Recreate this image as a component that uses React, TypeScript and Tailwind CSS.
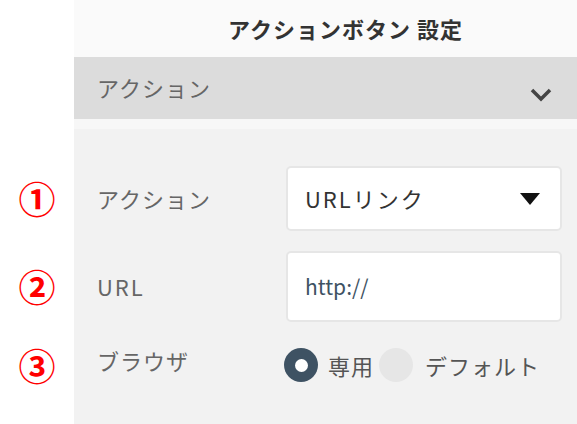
const font = { fontFamily: '"Noto Sans CJK JP", "Noto Sans", sans-serif' };

function Num({ n }: { n: string }) {
  return (
    <div className="flex w-[74px] shrink-0 items-center justify-center self-stretch bg-white">
      <span className="text-[37px] leading-none font-bold text-[#ff0000]">{n}</span>
    </div>
  );
}

export default function App() {
  return (
    <div className="flex h-[424px] w-[577px] flex-col overflow-hidden bg-white" style={font}>
      <div className="flex h-[57px]">
        <div className="w-[74px] shrink-0 bg-white" />
        <div className="flex flex-1 items-center bg-[#fafafa] pl-[154px]">
          <span className="text-[22px] font-bold tracking-[1px] text-[#333]">アクションボタン 設定</span>
        </div>
      </div>

      <div className="flex h-[62px]">
        <div className="w-[74px] shrink-0 bg-white" />
        <div className="flex flex-1 items-center justify-between bg-[#dcdcdc] pr-[25px] pl-[23px]">
          <span className="-mt-[2px] text-[22px] tracking-[1px] text-[#666]">アクション</span>
          <svg width="22" height="14" viewBox="0 0 22 14" className="mt-[14px]">
            <path d="M2 2L11 11L20 2" fill="none" stroke="#444" strokeWidth="3.5" />
          </svg>
        </div>
      </div>

      <div className="flex h-[10px]">
        <div className="w-[74px] shrink-0 bg-white" />
        <div className="flex-1 bg-[#f7f7f7]" />
      </div>

      <div className="flex flex-1">
        <div className="w-[74px] shrink-0 bg-white" />
        <div className="flex-1 bg-[#f2f2f2]" />
      </div>

      <div className="absolute top-[166px] left-0 flex w-[577px] flex-col gap-[20px]">
        <div className="flex h-[65px] items-center">
          <Num n="①" />
          <div className="flex flex-1 items-center pr-[15px] pl-[23px]">
            <span className="w-[189px] text-[22px] tracking-[1px] text-[#666]">アクション</span>
            <div className="flex h-[65px] flex-1 items-center justify-between rounded-[5px] border-2 border-[#e6e6e6] bg-white pr-[20px] pl-[17px]">
              <span className="text-[22px] tracking-[2px] text-[#333]">URLリンク</span>
              <svg width="20" height="12" viewBox="0 0 20 12">
                <path d="M0 0H20L10 12Z" fill="#111" />
              </svg>
            </div>
          </div>
        </div>

        <div className="flex h-[71px] items-center">
          <Num n="②" />
          <div className="flex flex-1 items-center pr-[15px] pl-[23px]">
            <span className="w-[189px] text-[22px] tracking-[2px] text-[#666]">URL</span>
            <div className="flex h-[71px] flex-1 items-center rounded-[5px] border-2 border-[#e6e6e6] bg-white pl-[17px]">
              <span className="text-[21px] text-[#3e5263]">http://</span>
            </div>
          </div>
        </div>

        <div className="flex h-[46px] items-center">
          <Num n="③" />
          <div className="flex flex-1 items-center pl-[23px]">
            <span className="-mt-[10px] w-[187px] text-[22px] tracking-[1px] text-[#666]">ブラウザ</span>
            <div className="flex items-center">
              <span className="flex h-[34px] w-[34px] items-center justify-center rounded-full bg-[#3e5263]">
                <span className="h-[13px] w-[13px] rounded-full bg-white" />
              </span>
              <span className="ml-[10px] text-[22px] tracking-[1px] text-[#555]">専用</span>
              <span className="ml-[5px] h-[34px] w-[34px] rounded-full bg-[#e6e6e6]" />
              <span className="ml-[12px] text-[22px] tracking-[1px] text-[#555]">デフォルト</span>
            </div>
          </div>
        </div>
      </div>
    </div>
  );
}
